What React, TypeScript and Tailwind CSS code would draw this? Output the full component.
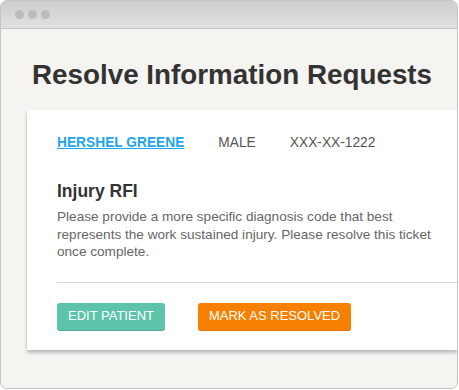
import React from "react";

export default function App() {
  return (
    <div className="w-[459px] h-[390px] bg-white" style={{ fontFamily: '"Liberation Sans", Arial, sans-serif' }}>
      <div className="w-[458px] h-[389px] rounded-[7px] border border-[#c4c4c4] bg-[#f5f4f1] overflow-hidden flex flex-col">
        <div className="h-[28px] shrink-0 bg-gradient-to-b from-[#cdcdcd] to-[#e1e1e1] border-b border-[#c6c6c6] flex items-center gap-[4px] pl-[14px]">
          <span className="w-[9px] h-[9px] rounded-full bg-[#bcbcbc]" />
          <span className="w-[9px] h-[9px] rounded-full bg-[#bcbcbc]" />
          <span className="w-[9px] h-[9px] rounded-full bg-[#bcbcbc]" />
        </div>
        <div className="pl-[26px] flex flex-col">
          <h1 className="mt-[29px] ml-[5px] text-[27.8px] leading-[34px] font-bold text-[#333333]">Resolve Information Requests</h1>
          <div className="mt-[18px] bg-white shadow-[0_3px_3px_rgba(0,0,0,0.22),-1px_0_2px_rgba(0,0,0,0.06)] pl-[30px] pt-[25px] pb-[19px]">
            <div className="flex items-center text-[13.75px] leading-[16px]">
              <a className="font-bold text-[#1ea5ea] underline underline-offset-[1px] decoration-[1px]">HERSHEL GREENE</a>
              <span className="ml-[34px] text-[#555555]">MALE</span>
              <span className="ml-[34px] text-[#555555]">XXX-XX-1222</span>
            </div>
            <div className="mt-[29px] text-[17.5px] leading-[22px] font-bold text-[#333333]">Injury RFI</div>
            <p className="mt-[6px] w-[390px] text-[13.6px] leading-[17.5px] text-[#666666]">
              Please provide a more specific diagnosis code that best represents the work sustained injury. Please resolve this ticket once complete.
            </p>
            <div className="mt-[21px] h-px bg-[#d9d9d9]" />
            <div className="mt-[20px] flex gap-[33px]">
              <button className="w-[108px] h-[28px] rounded-[3px] bg-[#5cc5a9] border-b border-[#4fb096] text-white text-[13px]">EDIT PATIENT</button>
              <button className="w-[153px] h-[28px] rounded-[3px] bg-[#f88000] border-b border-[#e07200] text-white text-[13px]">MARK AS RESOLVED</button>
            </div>
          </div>
        </div>
      </div>
    </div>
  );
}
